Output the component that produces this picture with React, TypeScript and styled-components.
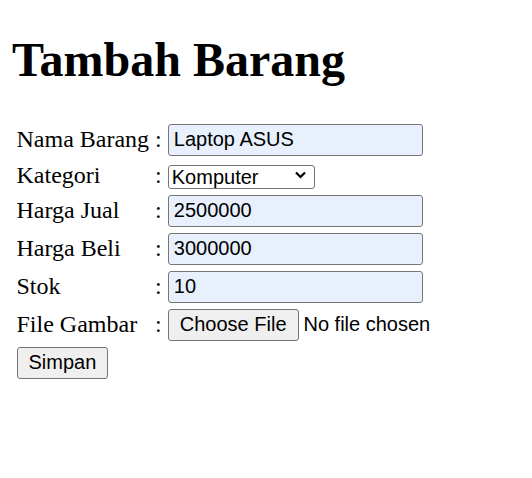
import styled, { createGlobalStyle } from "styled-components";

const GlobalStyle = createGlobalStyle`
    html, body {
        margin: 0;
        padding: 0;
        background: #ffffff;
    }
    body {
        padding: 1px 12px 12px;
        font-family: "Liberation Serif", "Times New Roman", serif;
        font-size: 24px;
        color: #000000;
    }
    * {
        box-sizing: border-box;
    }
`;

const Title = styled.h1`
    font-size: 48px;
    font-weight: bold;
    margin: 31px 0 32px;
    line-height: 55px;
`;

const FormTable = styled.table`
    border-spacing: 3px;
    border-collapse: separate;
    font-size: 24px;
`;

const Cell = styled.td`
    padding: 1.5px;
    vertical-align: middle;
    white-space: nowrap;
    line-height: 27px;
`;

const TextInput = styled.input`
    display: block;
    width: 255px;
    height: 32px;
    margin: 0;
    padding: 1px 5px;
    font-family: "Liberation Sans", Arial, sans-serif;
    font-size: 20px;
    color: #000000;
    background: #e8f0fe;
    border: 1px solid #767676;
    border-radius: 3px;
    outline: none;
`;

const SelectWrap = styled.div`
    position: relative;
    width: 147px;
    height: 24px;
    margin: -1px 0 0;
`;

const Select = styled.select`
    appearance: none;
    width: 100%;
    height: 100%;
    margin: 0;
    padding: 0 24px 0 3px;
    font-family: "Liberation Sans", Arial, sans-serif;
    font-size: 20px;
    line-height: 22px;
    color: #000000;
    background: #ffffff;
    border: 1px solid #767676;
    border-radius: 3px;
    outline: none;
`;

const Chevron = styled.svg`
    position: absolute;
    right: 9px;
    top: 8px;
    pointer-events: none;
`;

const FileRow = styled.div`
    display: flex;
    align-items: center;
    gap: 5px;
    font-family: "Liberation Sans", Arial, sans-serif;
    font-size: 20px;
`;

const Button = styled.button`
    height: 32px;
    margin: 0;
    padding: 0 11px;
    font-family: "Liberation Sans", Arial, sans-serif;
    font-size: 20px;
    color: #000000;
    background: #efefef;
    border: 1px solid #767676;
    border-radius: 3px;
`;

const rows = [
    { label: "Nama Barang", value: "Laptop ASUS" },
    { label: "Harga Jual", value: "2500000" },
    { label: "Harga Beli", value: "3000000" },
    { label: "Stok", value: "10" },
];

const LabelRow = ({ label, children }: { label: string; children: React.ReactNode }) => (
    <tr>
        <Cell>{label}</Cell>
        <Cell>:</Cell>
        <Cell>{children}</Cell>
    </tr>
);

export default function App() {
    return (
        <>
            <GlobalStyle />
            <Title>Tambah Barang</Title>
            <form onSubmit={(e) => e.preventDefault()}>
                <FormTable>
                    <tbody>
                        <LabelRow label={rows[0].label}>
                            <TextInput type="text" defaultValue={rows[0].value} />
                        </LabelRow>
                        <LabelRow label="Kategori">
                            <SelectWrap>
                                <Select defaultValue="Komputer">
                                    <option>Komputer</option>
                                    <option>Elektronik</option>
                                    <option>Aksesoris</option>
                                </Select>
                                <Chevron width="11" height="8" viewBox="0 0 11 8">
                                    <path d="M1 1.5 L5.5 6 L10 1.5" fill="none" stroke="#000" strokeWidth="2.2" />
                                </Chevron>
                            </SelectWrap>
                        </LabelRow>
                        {rows.slice(1).map((r) => (
                            <LabelRow key={r.label} label={r.label}>
                                <TextInput type="text" defaultValue={r.value} />
                            </LabelRow>
                        ))}
                        <LabelRow label="File Gambar">
                            <FileRow>
                                <Button type="button">Choose File</Button>
                                <span>No file chosen</span>
                            </FileRow>
                        </LabelRow>
                        <tr>
                            <Cell>
                                <Button type="submit">Simpan</Button>
                            </Cell>
                        </tr>
                    </tbody>
                </FormTable>
            </form>
        </>
    );
}
